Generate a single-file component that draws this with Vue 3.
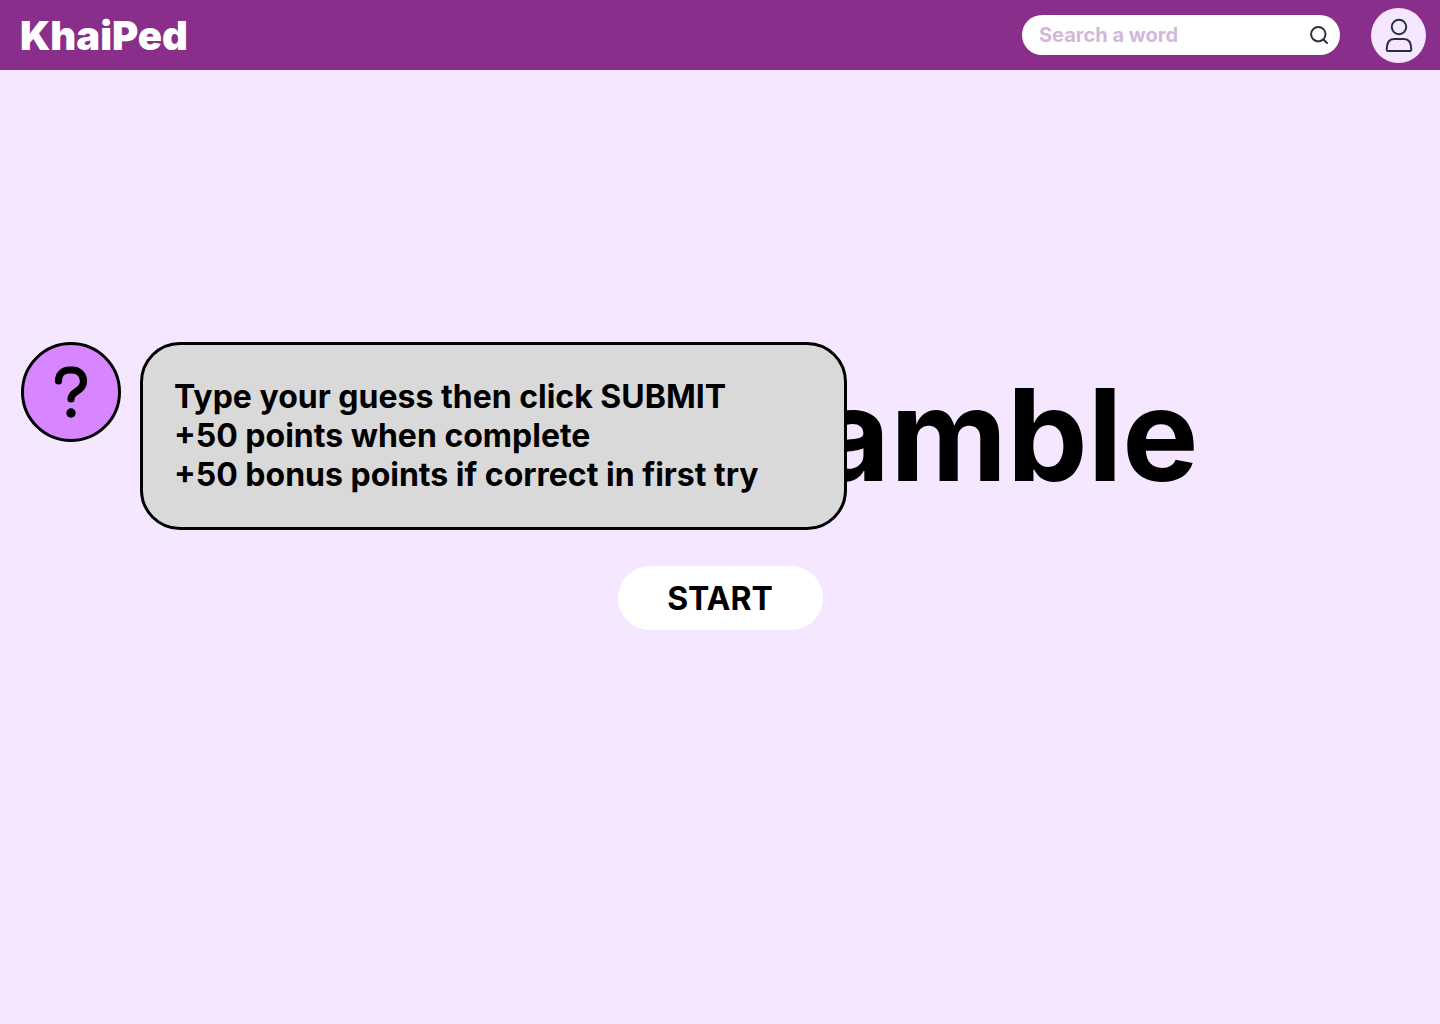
<script setup>
import { ref } from 'vue'

const query = ref('')
const showHelp = ref(true)
const rules = [
  'Type your guess then click SUBMIT',
  '+50 points when complete',
  '+50 bonus points if correct in first try',
]
</script>

<template>
  <div class="page">
    <header class="bar">
      <a class="logo" href="#">KhaiPed</a>
      <form class="search" role="search" @submit.prevent>
        <input v-model="query" class="search-input" type="search" placeholder="Search a word" aria-label="Search a word">
        <button class="search-button" type="submit" aria-label="Search">
          <svg width="20" height="20" viewBox="0 0 20 20" fill="none" stroke="#2b2f3a" stroke-width="2" stroke-linecap="round">
            <circle cx="9.300" cy="9.200" r="7.200" />
            <path d="M14.500 14.500L18 18" />
          </svg>
        </button>
      </form>
      <button class="profile" type="button" aria-label="Profile">
        <svg width="28" height="34" viewBox="0 0 28 34" fill="none" stroke="#2b2f3a" stroke-width="2" stroke-linejoin="round">
          <circle cx="14" cy="9" r="7.200" />
          <path d="M9 21h10c4.500 0 7.300 3.500 7.300 10.500 0 .9-.5 1.500-1.400 1.500H3.100c-.9 0-1.400-.6-1.400-1.500C1.700 24.500 4.500 21 9 21z" />
        </svg>
      </button>
    </header>

    <main class="game">
      <h1 class="title">Word Scramble</h1>
      <button class="start" type="button">START</button>

      <aside class="help">
        <button class="help-button" type="button" aria-label="How to play" :aria-expanded="showHelp" @click="showHelp = !showHelp">
          <svg width="34" height="52" viewBox="0 0 34 52" fill="none" stroke="#000" stroke-width="7.200" stroke-linecap="round">
            <path d="M4.500 15C4.500 8.500 9 4 15.500 4H18.500C25 4 29.500 9 29.500 15.500C29.500 20.500 26.500 23 22.500 25.500C19 27.700 17 29.500 17 33" />
            <circle cx="17" cy="47" r="4.700" fill="#000" stroke="none" />
          </svg>
        </button>
        <div v-if="showHelp" class="rules">
          <p v-for="rule in rules" :key="rule">{{ rule }}</p>
        </div>
      </aside>
    </main>
  </div>
</template>

<style>
body {
  margin: 0;
  background: #f4e7ff;
}
</style>

<style scoped>
.page {
  min-height: 100vh;
  background: #f4e7ff;
  color: #000;
  font-family: Inter, "Liberation Sans", sans-serif;
}

button {
  padding: 0;
  border: 0;
  color: inherit;
  font: inherit;
  cursor: pointer;
}

svg {
  display: block;
}

.bar {
  display: flex;
  align-items: center;
  box-sizing: border-box;
  height: 70px;
  padding: 0 14px 0 20px;
  background: #892e8a;
}

.logo {
  margin-right: auto;
  color: #fff;
  font-size: 40px;
  font-weight: 900;
  line-height: 49px;
  text-decoration: none;
}

.search {
  display: flex;
  align-items: center;
  box-sizing: border-box;
  width: 318px;
  height: 40px;
  margin-right: 31px;
  padding: 0 11px 0 17px;
  border-radius: 20px;
  background: #fff;
}

.search-input {
  flex: 1;
  min-width: 0;
  padding: 0;
  border: 0;
  outline: 0;
  background: transparent;
  color: #892e8a;
  font: 700 20px/24px Inter, "Liberation Sans", sans-serif;
}

.search-input::placeholder {
  color: #d3b8d9;
  opacity: 1;
}

.search-button {
  background: transparent;
}

.profile {
  display: flex;
  align-items: center;
  justify-content: center;
  width: 55px;
  height: 55px;
  border-radius: 50%;
  background: #f4e7ff;
}

.game {
  position: relative;
  display: flex;
  flex-direction: column;
  align-items: center;
  gap: 54px;
  padding: 287px 0 0;
}

.title {
  margin: 0;
  font-size: 128px;
  font-weight: 700;
  line-height: 155px;
  white-space: nowrap;
}

.start {
  width: 205px;
  height: 64px;
  border-radius: 32px;
  background: #fff;
  font-size: 32px;
  font-weight: 700;
  line-height: 39px;
}

.help {
  position: absolute;
  top: 272px;
  left: 21px;
  display: flex;
  align-items: flex-start;
  gap: 19px;
}

.help-button {
  display: flex;
  align-items: center;
  justify-content: center;
  box-sizing: border-box;
  width: 100px;
  height: 100px;
  border: 3px solid #000;
  border-radius: 50%;
  background: #d886ff;
}

.rules {
  box-sizing: border-box;
  width: 707px;
  padding: 32px 32px 33px 31px;
  border: 3px solid #000;
  border-radius: 40px;
  background: #d9d9d9;
  font-size: 32px;
  font-weight: 700;
  line-height: 39px;
}

.rules p {
  margin: 0;
}
</style>
